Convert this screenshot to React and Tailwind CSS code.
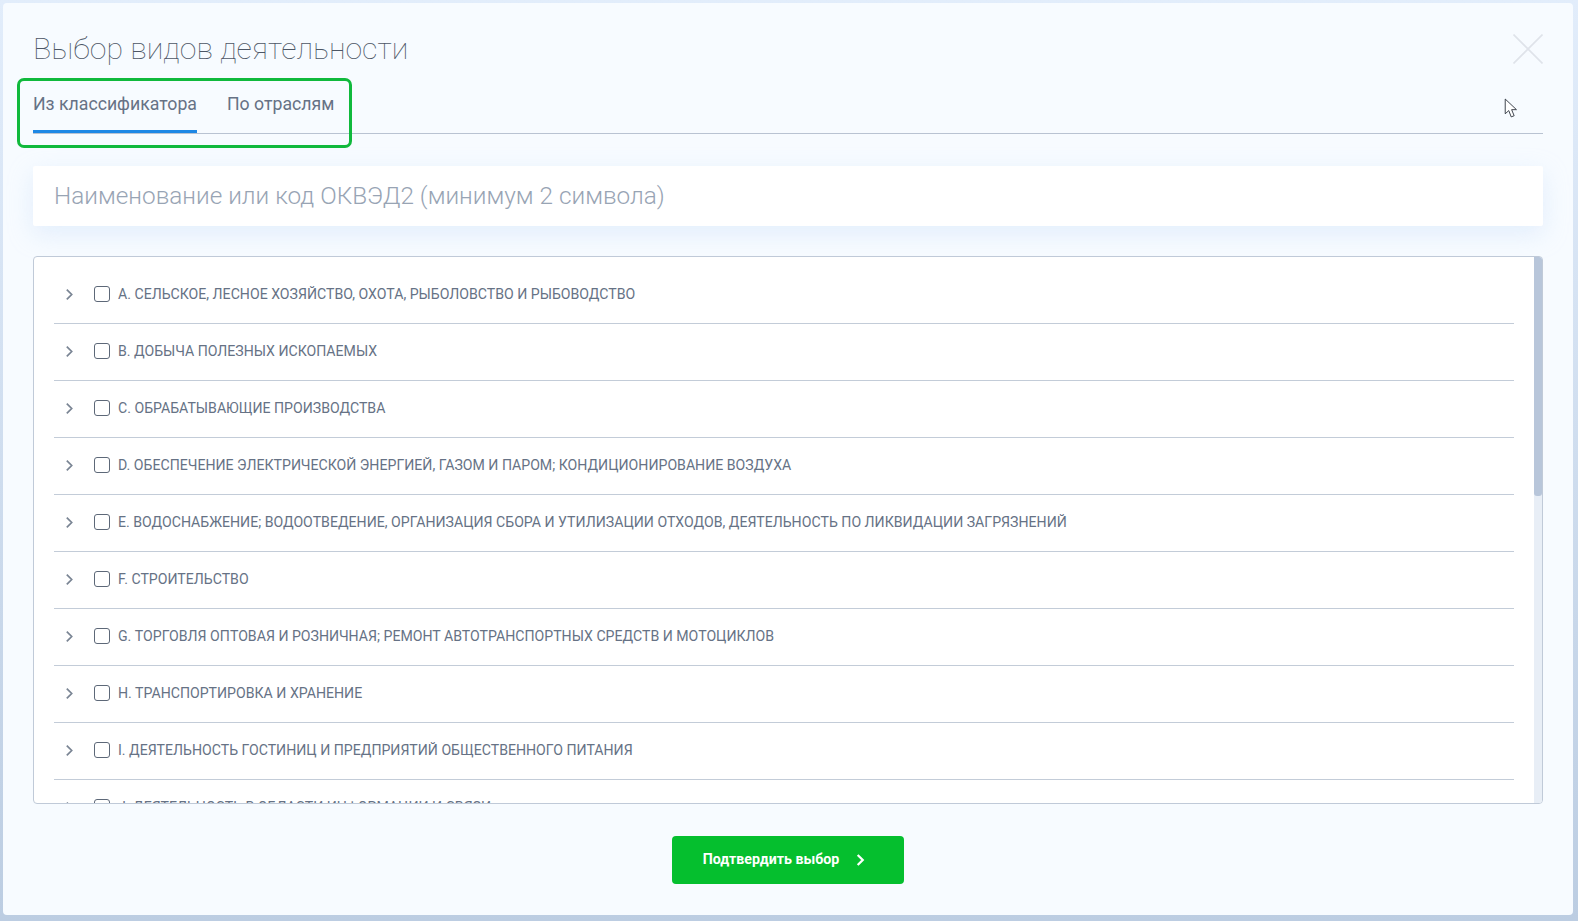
import React from 'react';

const ROWS = [
  'А. СЕЛЬСКОЕ, ЛЕСНОЕ ХОЗЯЙСТВО, ОХОТА, РЫБОЛОВСТВО И РЫБОВОДСТВО',
  'В. ДОБЫЧА ПОЛЕЗНЫХ ИСКОПАЕМЫХ',
  'С. ОБРАБАТЫВАЮЩИЕ ПРОИЗВОДСТВА',
  'D. ОБЕСПЕЧЕНИЕ ЭЛЕКТРИЧЕСКОЙ ЭНЕРГИЕЙ, ГАЗОМ И ПАРОМ; КОНДИЦИОНИРОВАНИЕ ВОЗДУХА',
  'Е. ВОДОСНАБЖЕНИЕ; ВОДООТВЕДЕНИЕ, ОРГАНИЗАЦИЯ СБОРА И УТИЛИЗАЦИИ ОТХОДОВ, ДЕЯТЕЛЬНОСТЬ ПО ЛИКВИДАЦИИ ЗАГРЯЗНЕНИЙ',
  'F. СТРОИТЕЛЬСТВО',
  'G. ТОРГОВЛЯ ОПТОВАЯ И РОЗНИЧНАЯ; РЕМОНТ АВТОТРАНСПОРТНЫХ СРЕДСТВ И МОТОЦИКЛОВ',
  'Н. ТРАНСПОРТИРОВКА И ХРАНЕНИЕ',
  'I. ДЕЯТЕЛЬНОСТЬ ГОСТИНИЦ И ПРЕДПРИЯТИЙ ОБЩЕСТВЕННОГО ПИТАНИЯ',
  'J. ДЕЯТЕЛЬНОСТЬ В ОБЛАСТИ ИНФОРМАЦИИ И СВЯЗИ',
];

function Chevron({ className, width = 2 }) {
  return (
    <svg className={className} viewBox="0 0 8 12" fill="none" stroke="currentColor" strokeWidth={width}>
      <path d="M1.5 1.5 6 6l-4.5 4.5" />
    </svg>
  );
}

function Row({ text }) {
  return (
    <div className="flex h-[57px] flex-none items-center border-b border-[#c3ccd8] pb-[2px] pl-[11px]">
      <Chevron className="h-[13px] w-[9px] flex-none text-[#7a8594]" width={1.6} />
      <span className="ml-5 h-4 w-4 flex-none rounded-[3px] border border-[#5d6878] bg-white" />
      <span className="mt-[2px] ml-2 text-[14.14px] whitespace-nowrap text-[#667285]">{text}</span>
    </div>
  );
}

export default function App() {
  return (
    <div className="h-[921px] w-[1578px] overflow-hidden bg-gradient-to-b from-[#e2edfb] to-[#bccde2] pt-[3px] pl-[3px] font-['Roboto',sans-serif]">
      <div className="relative h-[912px] w-[1570px] rounded-[4px] bg-[#f7fbff] px-[30px] pt-[26px]">
        <h1 className="h-10 text-[30.25px] leading-10 font-thin text-[#4c5665]">Выбор видов деятельности</h1>

        {/* Закрыть */}
        <button className="absolute top-[31px] right-[30px] text-[#dfe3ea]">
          <svg className="h-[30px] w-[30px]" viewBox="0 0 30 30" stroke="currentColor" strokeWidth="1.6">
            <path d="M0.5 0.5 29.5 29.5M29.5 0.5 0.5 29.5" />
          </svg>
        </button>

        {/* Вкладки */}
        <div className="flex h-[65px] gap-[30px] border-b border-[#b9c3d2]">
          <div className="flex h-[64px] items-end border-b-[3px] border-[#1e88e5] pb-[14px] text-[17.7px] leading-6 text-[#667285]">Из классификатора</div>
          <div className="flex h-[64px] items-end pb-[17px] text-[17.7px] leading-6 text-[#667285]">По отраслям</div>
        </div>

        <input
          placeholder="Наименование или код ОКВЭД2 (минимум 2 символа)"
          className="mt-8 block h-[60px] w-full rounded-[2px] bg-white px-[21px] pb-[2px] text-[24.33px] font-light text-[#5f6b7c] shadow-[0_8px_24px_rgba(190,215,245,0.35)] outline-none placeholder:text-[#98a4b4]"
        />

        {/* Список ОКВЭД */}
        <div className="mt-[30px] flex h-[548px] overflow-hidden rounded-[4px] border border-[#c0cad8] bg-white">
          <div className="flex min-w-0 flex-1 flex-col overflow-hidden pt-[10px] pr-5 pl-5">
            {ROWS.map((text) => (
              <Row key={text} text={text} />
            ))}
          </div>
          <div className="w-2 flex-none bg-[#e8eef6]">
            <div className="h-[239px] rounded-b-[3px] bg-[#b8c6da]" />
          </div>
        </div>

        <div className="mt-8 flex justify-center">
          <button className="flex h-12 w-[232px] items-center justify-center gap-[17px] rounded-[4px] bg-[#05bf2e] pr-[8px] text-[14.2px] font-bold text-white">
            Подтвердить выбор
            <Chevron className="h-[14px] w-[9px] text-white" />
          </button>
        </div>

        {/* Зелёная рамка поверх вкладок */}
        <div className="absolute top-[75px] left-[14px] h-[70px] w-[335px] rounded-[7px] border-[3px] border-[#10b93c]" />

        {/* Курсор */}
        <svg className="absolute top-[95px] left-[1501px] h-[21px] w-[14px]" viewBox="0 0 13 20" fill="#fff" stroke="#1f2530" strokeWidth="0.8">
          <path d="M1 1v14l3.4-3 2.3 6 2.8-1.1-2.4-5.8h4.6z" />
        </svg>
      </div>
    </div>
  );
}
